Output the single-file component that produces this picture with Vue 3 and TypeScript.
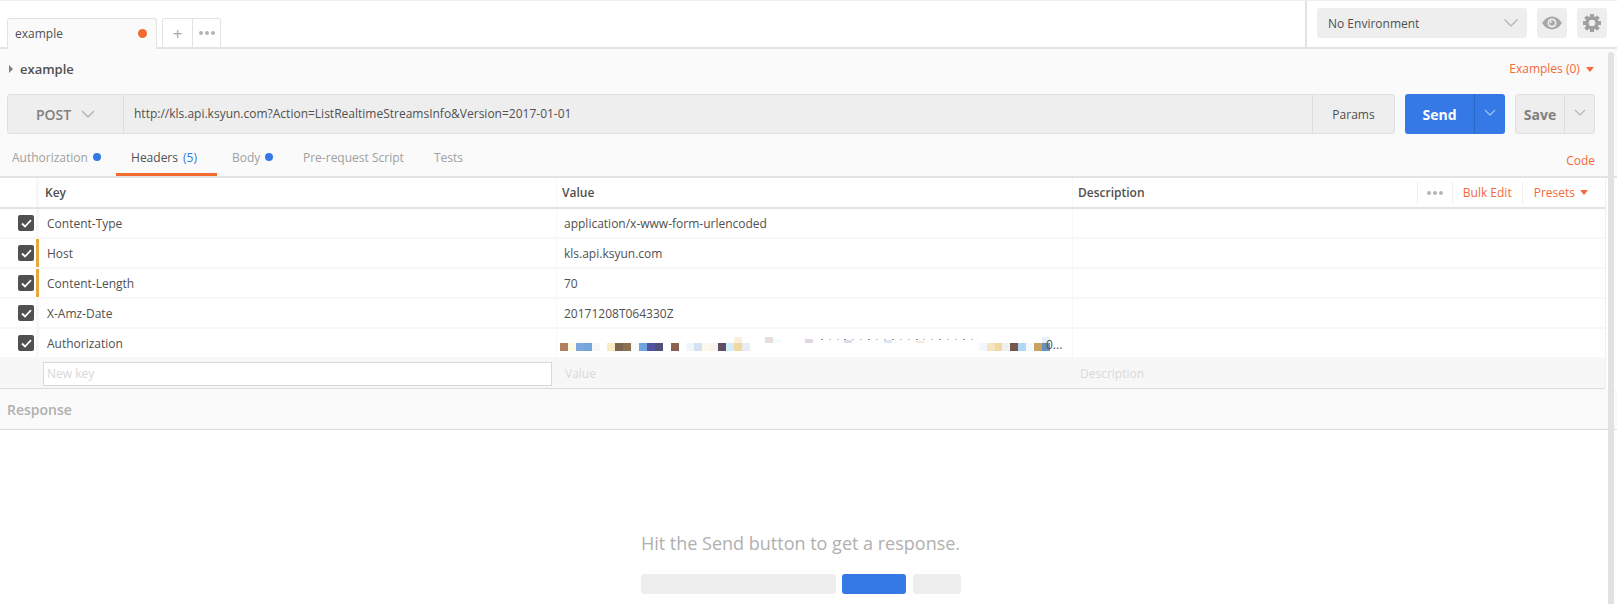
<script setup lang="ts">
interface Header { key: string; value: string; mark: boolean }
interface Chip { i: number; color: string; top?: number; h?: number; w?: number }
const headers: Header[] = [
  { key: 'Content-Type', value: 'application/x-www-form-urlencoded', mark: false },
  { key: 'Host', value: 'kls.api.ksyun.com', mark: true },
  { key: 'Content-Length', value: '70', mark: true },
  { key: 'X-Amz-Date', value: '20171208T064330Z', mark: false },
  { key: 'Authorization', value: '', mark: false },
]
const main: [number, string][] = [
  [0, '#b07f5e'], [1, '#fdfbe4'], [2, '#7ba7dc'], [3, '#73a6da'], [4, '#f6f7f9'],
  [6, '#f7ecc4'], [7, '#7f6450'], [8, '#8b7150'], [9, '#f7f8f8'], [10, '#71a5dc'], [11, '#5354a0'], [12, '#4e5178'],
  [14, '#89624f'], [16, '#eff6fc'], [17, '#d3e2f0'], [18, '#fcf9ec'], [19, '#f6f3ea'], [20, '#5f4f64'], [21, '#d2f0fb'], [22, '#f0d9a0'], [23, '#e8edf2'],
  [53, '#f2f7fb'], [54, '#f4e4bf'], [55, '#efd99f'], [56, '#eff1f0'], [57, '#765650'], [58, '#aed8f6'], [59, '#f3f9fd'], [60, '#c9a262'], [61, '#688ebc'],
]
const upper: Chip[] = [
  { i: 22, color: '#fbeedb', top: -6, h: 6 },
  { i: 26, color: '#e8ddd8', top: -6, h: 6 },
  { i: 27, color: '#f3fbfe', top: -4, h: 4 },
  { i: 31, color: '#dfd8e2', top: -4, h: 4 },
  { i: 36, color: '#dcdcea', top: -3, h: 3 },
  { i: 41, color: '#dde7f3', top: -3, h: 3 },
  { i: 45, color: '#f5e6dc', top: -2, h: 2 },
  { i: 61, color: '#e6f0f8', top: -6, h: 6 },
]
const specks: Chip[] = Array.from({ length: 20 }, (_, n) => ({
  i: 33 + n,
  color: n % 3 === 0 ? '#8d93a6' : '#c3c6cf',
  top: -4,
  h: 1,
  w: 2,
}))
const chips: Chip[] = [
  ...main.map(([i, color]) => ({ i, color })),
  ...upper,
  ...specks,
]
const chipStyle = (c: Chip) => ({
  left: `${c.i * 7.9}px`,
  top: `${c.top ?? 0}px`,
  height: `${c.h ?? 8}px`,
  width: `${c.w ?? 8}px`,
  background: c.color,
})
const teeth = [0, 45, 90, 135, 180, 225, 270, 315]
</script>

<template>
  <div class="app">
    <header class="topbar">
      <div class="tabs">
        <div class="tab"><span>example</span><i class="dot"></i></div>
        <div class="tab-tools">
          <div class="plus">+</div>
          <div class="more"><i></i><i></i><i></i></div>
        </div>
      </div>
      <div class="env">
        <div class="env-select">
          <span>No Environment</span>
          <svg width="16" height="10" viewBox="0 0 16 10"><path d="M1.5 1.500 8 8l6.500-6.500" fill="none" stroke="#b9b9b9" stroke-width="1.500"/></svg>
        </div>
        <div class="env-btn">
          <svg width="20" height="14" viewBox="0 0 20 14"><path d="M0 7C3 2.500 6.300.5 10 .5S17 2.500 20 7c-3 4.500-6.300 6.500-10 6.500S3 11.500 0 7Z" fill="#a8a8a8"/><circle cx="10" cy="7" r="4.500" fill="#eee"/><circle cx="10" cy="7" r="2.800" fill="#a8a8a8"/><circle cx="8.900" cy="5.900" r="1" fill="#eee"/></svg>
        </div>
        <div class="env-btn">
          <svg width="18" height="18" viewBox="0 0 18 18">
            <rect v-for="t in teeth" :key="t" x="7" y="0" width="4" height="4" fill="#a0a0a0" :transform="`rotate(${t} 9 9)`"/>
            <circle cx="9" cy="9" r="5" fill="none" stroke="#a0a0a0" stroke-width="3.400"/>
          </svg>
        </div>
      </div>
    </header>

    <section class="request">
      <div class="name-row">
        <div class="name"><i class="caret-right"></i><b>example</b></div>
        <div class="link examples">Examples (0) <i class="caret-down"></i></div>
      </div>

      <div class="url-row">
        <div class="url-box">
          <div class="method"><b>POST</b>
            <svg width="14" height="9" viewBox="0 0 14 9"><path d="M1 1l6 6 6-6" fill="none" stroke="#b5b5b5" stroke-width="1.500"/></svg>
          </div>
          <div class="url">http://kls.api.ksyun.com?Action=ListRealtimeStreamsInfo&amp;Version=2017-01-01</div>
          <div class="params">Params</div>
        </div>
        <div class="send">
          <b>Send</b>
          <div class="split"><svg width="12" height="8" viewBox="0 0 12 8"><path d="M1 1l5 5 5-5" fill="none" stroke="#9cc0f2" stroke-width="1.300"/></svg></div>
        </div>
        <div class="save">
          <b>Save</b>
          <div class="split"><svg width="12" height="8" viewBox="0 0 12 8"><path d="M1 1l5 5 5-5" fill="none" stroke="#b5b5b5" stroke-width="1.200"/></svg></div>
        </div>
      </div>

      <nav class="req-tabs">
        <div class="rt rt-auth">Authorization <i class="bdot"></i></div>
        <div class="rt rt-head">Headers <span class="count">(5)</span></div>
        <div class="rt rt-body">Body <i class="bdot"></i></div>
        <div class="rt rt-pre">Pre-request Script</div>
        <div class="rt rt-tests">Tests</div>
        <div class="link code">Code</div>
      </nav>
    </section>

    <section class="table">
      <div class="row thead">
        <div class="c0"></div>
        <div class="c1">Key</div>
        <div class="c2">Value</div>
        <div class="c3 head-desc">
          <span>Description</span>
          <div class="tools">
            <div class="more gray"><i></i><i></i><i></i></div>
            <div class="link tool">Bulk Edit</div>
            <div class="link tool">Presets <i class="caret-down"></i></div>
          </div>
        </div>
      </div>
      <div v-for="h in headers" :key="h.key" class="row item">
        <div class="c0">
          <span class="check"><svg width="11" height="9" viewBox="0 0 11 9"><path d="M1 4.500 4 7.500 10 1.200" fill="none" stroke="#fff" stroke-width="1.800"/></svg></span>
          <i v-if="h.mark" class="mark"></i>
        </div>
        <div class="c1">{{ h.key }}</div>
        <div class="c2">
          {{ h.value }}
          <span v-if="h.key === 'Authorization'" class="blur">
            <i v-for="(c, n) in chips" :key="n" class="chip" :style="chipStyle(c)"></i>
            <em>0...</em>
          </span>
        </div>
        <div class="c3"></div>
      </div>
      <div class="row new">
        <div class="c0"></div>
        <div class="c1"><div class="input">New key</div></div>
        <div class="c2">Value</div>
        <div class="c3">Description</div>
      </div>
    </section>

    <div class="response-bar">Response</div>

    <section class="empty">
      <p>Hit the Send button to get a response.</p>
      <div class="ghost">
        <i class="g1"></i><i class="g2"></i><i class="g3"></i>
      </div>
    </section>

    <div class="scrollbar"></div>
  </div>
</template>

<style>
html, body { margin: 0; background: #fff; }
</style>

<style scoped>
.app {
  position: relative;
  width: 1617px;
  height: 604px;
  overflow: hidden;
  background: #fff;
  font-family: "Open Sans", "Noto Sans", sans-serif;
  font-size: 12px;
  color: #505050;
  box-sizing: border-box;
}
.app i { display: block; font-style: normal; }
.topbar {
  height: 49px;
  box-sizing: border-box;
  border-top: 1px solid #eee;
  border-bottom: 2px solid #e3e3e3;
  display: flex;
  justify-content: space-between;
}
.tabs { display: flex; align-items: flex-end; padding-left: 7px; margin-bottom: -2px; }
.tab {
  width: 150px;
  height: 31px;
  box-sizing: border-box;
  border: 1px solid #e3e3e3;
  border-bottom: 0;
  border-radius: 3px 3px 0 0;
  background: #fafafa;
  display: flex;
  align-items: center;
  justify-content: space-between;
  padding: 0 9px 1px 7px;
  color: #505050;
}
.dot { width: 9px; height: 9px; border-radius: 50%; background: #f26b2e; }
.tab-tools {
  display: flex;
  margin-left: 5px;
  height: 31px;
  box-sizing: border-box;
  border: 1px solid #e3e3e3;
  border-bottom: 2px solid #e3e3e3;
  border-radius: 3px 3px 0 0;
  align-items: center;
}
.plus {
  width: 30px;
  height: 100%;
  border-right: 1px solid #e3e3e3;
  display: flex;
  align-items: center;
  justify-content: center;
  color: #a8a8a8;
  font-size: 17px;
  box-sizing: border-box;
}
.more { display: flex; gap: 2px; width: 27px; justify-content: center; }
.more i { width: 4px; height: 4px; border-radius: 50%; background: #b4b4b4; }
.env {
  width: 312px;
  box-sizing: border-box;
  border-left: 2px solid #e3e3e3;
  padding: 7px 10px 0;
  display: flex;
  gap: 10px;
  align-items: flex-start;
}
.env-select {
  width: 210px;
  height: 30px;
  box-sizing: border-box;
  background: #eee;
  border-radius: 3px;
  display: flex;
  align-items: center;
  justify-content: space-between;
  padding: 0 8px 0 11px;
  color: #505050;
}
.env-btn {
  width: 30px;
  height: 30px;
  background: #eee;
  border-radius: 3px;
  display: flex;
  align-items: center;
  justify-content: center;
}
.request { background: #fafafa; height: 129px; box-sizing: border-box; border-bottom: 2px solid #e3e3e3; }
.name-row {
  height: 45px;
  box-sizing: border-box;
  display: flex;
  justify-content: space-between;
  align-items: center;
  padding: 0 23px 6px 9px;
}
.name { display: flex; align-items: center; gap: 7px; font-size: 13px; }
.name b { font-weight: 600; color: #505050; }
.caret-right { width: 0; height: 0; border-left: 4px solid #808080; border-top: 4px solid transparent; border-bottom: 4px solid transparent; }
.caret-down { display: inline-block !important; width: 0; height: 0; border-top: 5px solid #f4693a; border-left: 4px solid transparent; border-right: 4px solid transparent; margin-left: 3px; vertical-align: 1px; }
.link { color: #f4693a; }
.url-row { display: flex; padding-left: 7px; height: 40px; }
.url-box {
  width: 1388px;
  box-sizing: border-box;
  display: flex;
  background: #eee;
  border: 1px solid #e0e0e0;
  border-radius: 3px;
}
.method {
  width: 116px;
  box-sizing: border-box;
  border-right: 1px solid #dcdcdc;
  display: flex;
  align-items: center;
  justify-content: center;
  gap: 10px;
  color: #808080;
  font-size: 14px;
}
.method b { font-weight: 600; }
.url { flex: 1; display: flex; align-items: center; padding-left: 10px; color: #505050; padding-bottom: 2px; }
.params {
  width: 81px;
  border-left: 1px solid #dcdcdc;
  display: flex;
  align-items: center;
  justify-content: center;
}
.send, .save {
  display: flex;
  border-radius: 3px;
  margin-left: 10px;
  font-size: 14px;
  align-items: stretch;
  box-sizing: border-box;
}
.send { width: 100px; background: #3579e6; color: #fff; }
.send b { width: 69px; display: flex; align-items: center; justify-content: center; font-weight: 700; }
.send .split { flex: 1; border-left: 1px solid #2a66c4; display: flex; align-items: center; justify-content: center; padding-bottom: 3px; }
.save { width: 80px; background: #eee; border: 1px solid #e0e0e0; color: #808080; }
.save b { width: 48px; display: flex; align-items: center; justify-content: center; font-weight: 700; }
.save .split { flex: 1; border-left: 1px solid #dcdcdc; display: flex; align-items: center; justify-content: center; padding-bottom: 3px; }
.req-tabs { display: flex; height: 42px; align-items: stretch; position: relative; }
.rt {
  display: flex;
  align-items: center;
  gap: 5px;
  color: #a0a0a0;
  padding-top: 4px;
  box-sizing: border-box;
}
.rt-auth { margin-left: 12px; width: 104px; }
.rt-head {
  width: 101px;
  justify-content: center;
  color: #505050;
  border-bottom: 3px solid #f26b2e;
  padding-top: 7px;
  padding-right: 5px;
}
.count { color: #3579e6; }
.rt-body { margin-left: 15px; width: 54px; }
.rt-pre { margin-left: 17px; width: 98px; white-space: nowrap; }
.rt-tests { margin-left: 33px; }
.bdot { width: 8px; height: 8px; border-radius: 50%; background: #3579e6; }
.code { margin-left: auto; margin-right: 22px; align-self: center; padding-top: 11px; }
.table { width: 1605px; border-right: 1px solid #f0f0f0; box-sizing: content-box; }
.row { display: flex; }
.c0 { width: 36px; flex: none; position: relative; display: flex; align-items: center; justify-content: flex-end; }
.c1 { width: 517px; flex: none; margin-left: 3px; padding-left: 7px; box-sizing: border-box; }
.c2 { width: 515px; flex: none; margin-left: 1px; padding-left: 7px; box-sizing: border-box; position: relative; }
.c3 { flex: 1; margin-left: 1px; padding-left: 6px; box-sizing: border-box; }
.thead {
  height: 31px;
  border-bottom: 2px solid #e3e3e3;
  background: #f7f7f7;
  box-sizing: border-box;
  font-weight: 600;
}
.thead .c0 { background: #fff; }
.thead .c1, .thead .c2, .thead .c3 { background: #fff; display: flex; align-items: center; }
.thead .c1 { padding-left: 6px; }
.thead .c2 { padding-left: 5px; }
.thead .c3 { padding-left: 5px; }
.head-desc { justify-content: space-between; }
.tools { display: flex; align-items: center; height: 22px; font-weight: 400; }
.more.gray { width: 36px; margin-left: -1px; border-left: 1px solid #f0f0f0; border-right: 1px solid #f0f0f0; height: 100%; align-items: center; box-sizing: border-box; }
.tool { padding: 0 10px; height: 100%; display: flex; align-items: center; }
.tool:nth-child(2) { border-right: 1px solid #f0f0f0; }
.tool:nth-child(3) { padding-left: 11px; padding-right: 17px; }
.tool .caret-down { margin-left: 5px; }
.item { height: 30px; background: #f7f7f7; box-sizing: border-box; }
.item .c0 { background: #fff; margin-bottom: 2px; }
.item .c1, .item .c2, .item .c3 { background: #fff; display: flex; align-items: center; margin-bottom: 2px; }
.item .c1 { padding-left: 8px; }
.check {
  width: 16px;
  height: 16px;
  margin-right: 2px;
  border-radius: 2px;
  background: #505050;
  display: flex;
  align-items: center;
  justify-content: center;
}
.mark { position: absolute; right: -3px; top: 0; bottom: 0; width: 3px; background: #e8a83c; }
.blur { position: absolute; left: 3px; top: 14px; width: 500px; height: 8px; }
.chip { position: absolute; }
.blur em { position: absolute; left: 486px; top: -6px; font-style: normal; font-size: 12px; color: #505050; line-height: 16px; }
.new { height: 30px; background: #f7f7f7; border-bottom: 1px solid #dcdcdc; box-sizing: content-box; color: #d8d8d8; margin-top: -1px; }
.new .c1 { padding: 4px 0 0 4px; }
.new .c2, .new .c3 { display: flex; align-items: center; padding-top: 1px; padding-left: 8px; }
.new .c3 { padding-left: 7px; }
.input {
  height: 24px;
  box-sizing: border-box;
  border: 1px solid #d8d8d8;
  background: #fff;
  padding: 0 0 1px 3px;
  display: flex;
  align-items: center;
  width: 509px;
}
.response-bar {
  height: 41px;
  box-sizing: border-box;
  background: #fafafa;
  border-bottom: 1px solid #dcdcdc;
  display: flex;
  align-items: center;
  padding-left: 7px;
  font-weight: 600;
  font-size: 14px;
  color: #b0b0b0;
}
.empty { display: flex; flex-direction: column; align-items: center; padding-top: 101px; padding-right: 16px; }
.empty p { margin: 0; font-size: 18px; line-height: 24px; color: #b0b0b0; }
.ghost { display: flex; margin-top: 19px; gap: 6px; }
.ghost i { height: 20px; border-radius: 3px; background: #eee; }
.g1 { width: 195px; }
.app .g2 { width: 64px; background: #3579e6; }
.g3 { width: 48px; margin-left: 1px; }
.scrollbar {
  position: absolute;
  left: 1608px;
  top: 52px;
  width: 6px;
  bottom: 0;
  border-radius: 3px 3px 0 0;
  background: #e2e2e2;
}
</style>
